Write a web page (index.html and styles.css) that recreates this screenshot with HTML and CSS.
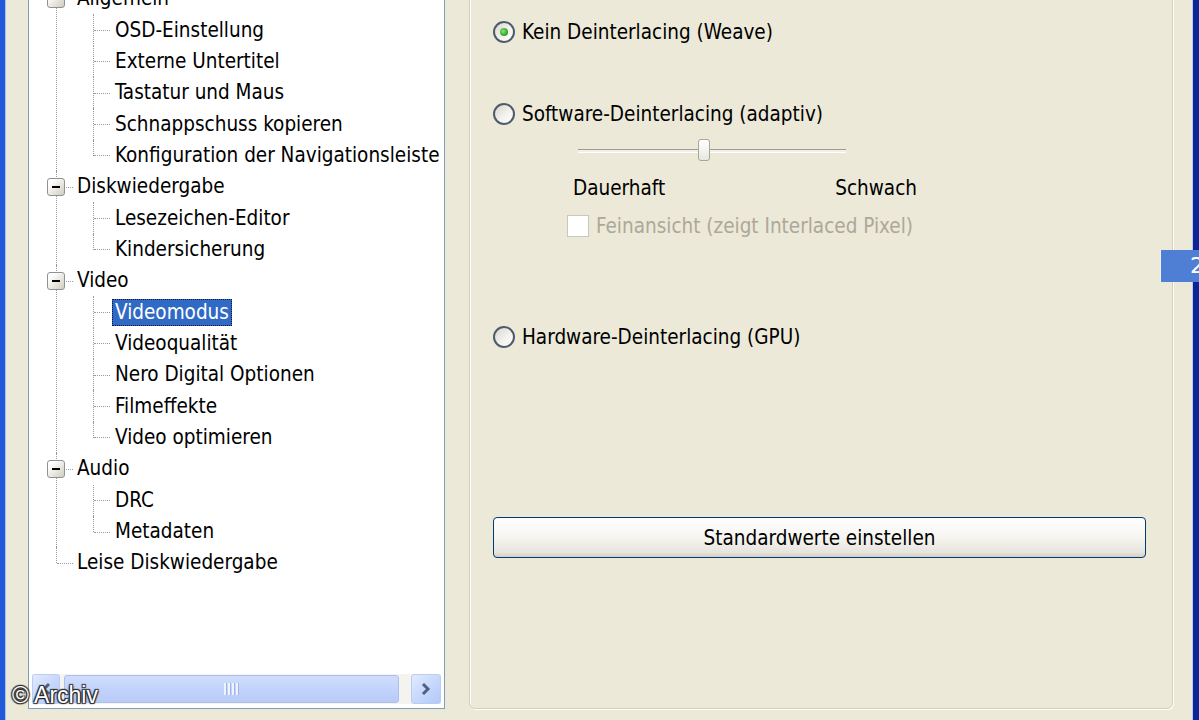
FILE: index.html
```html
<!DOCTYPE html>
<html lang="de">
<head>
<meta charset="utf-8">
<title>Videomodus</title>
<link rel="stylesheet" href="styles.css">
</head>
<body>
<div class="frame-left"></div>
<div class="content">
  <div class="tree-panel">
    <ul class="tree">
      <li>
        <div class="row"><span class="exp"></span><span class="label">Allgemein</span></div>
        <ul class="sub">
          <li><div class="row"><span class="label">OSD-Einstellung</span></div></li>
          <li><div class="row"><span class="label">Externe Untertitel</span></div></li>
          <li><div class="row"><span class="label">Tastatur und Maus</span></div></li>
          <li><div class="row"><span class="label">Schnappschuss kopieren</span></div></li>
          <li><div class="row"><span class="label">Konfiguration der Navigationsleiste</span></div></li>
        </ul>
      </li>
      <li>
        <div class="row"><span class="exp"></span><span class="label">Diskwiedergabe</span></div>
        <ul class="sub">
          <li><div class="row"><span class="label">Lesezeichen-Editor</span></div></li>
          <li><div class="row"><span class="label">Kindersicherung</span></div></li>
        </ul>
      </li>
      <li>
        <div class="row"><span class="exp"></span><span class="label">Video</span></div>
        <ul class="sub">
          <li><div class="row"><span class="label selected">Videomodus</span></div></li>
          <li><div class="row"><span class="label">Videoqualität</span></div></li>
          <li><div class="row"><span class="label">Nero Digital Optionen</span></div></li>
          <li><div class="row"><span class="label">Filmeffekte</span></div></li>
          <li><div class="row"><span class="label">Video optimieren</span></div></li>
        </ul>
      </li>
      <li>
        <div class="row"><span class="exp"></span><span class="label">Audio</span></div>
        <ul class="sub">
          <li><div class="row"><span class="label">DRC</span></div></li>
          <li><div class="row"><span class="label">Metadaten</span></div></li>
        </ul>
      </li>
      <li>
        <div class="row leaf"><span class="label">Leise Diskwiedergabe</span></div>
      </li>
    </ul>
    <div class="hscroll">
      <div class="sbtn left"><svg width="12" height="14" viewBox="0 0 12 14"><path d="M9 2 L4 7 L9 12" fill="none" stroke="#4d6185" stroke-width="3"/></svg></div>
      <div class="track">
        <div class="thumb"><span class="grip"></span></div>
      </div>
      <div class="sbtn right"><svg width="12" height="14" viewBox="0 0 12 14"><path d="M3 2 L8 7 L3 12" fill="none" stroke="#4d6185" stroke-width="3"/></svg></div>
    </div>
  </div>

  <div class="group">
    <div class="opt first"><span class="radio checked"></span><span>Kein Deinterlacing (Weave)</span></div>
    <div class="opt second"><span class="radio"></span><span>Software-Deinterlacing (adaptiv)</span></div>
    <div class="slider">
      <div class="groove"></div>
      <div class="knob"></div>
    </div>
    <div class="ticks"><span>Dauerhaft</span><span>Schwach</span></div>
    <div class="check disabled"><span class="box"></span><span>Feinansicht (zeigt Interlaced Pixel)</span></div>
    <div class="opt third"><span class="radio"></span><span>Hardware-Deinterlacing (GPU)</span></div>
    <button class="btn">Standardwerte einstellen</button>
  </div>
  <div class="gutter"></div>
</div>
<div class="frame-right"></div>
<div class="tab">2</div>
<div class="watermark">© Archiv</div>
</body>
</html>
```

FILE: styles.css
```css
html, body {
  margin: 0;
  padding: 0;
}
body {
  width: 1199px;
  height: 720px;
  overflow: hidden;
  display: flex;
  position: relative;
  background: #ece9d8;
  font-family: "DejaVu Sans Condensed", "DejaVu Sans", sans-serif;
  font-size: 20.5px;
  color: #000;
}
.frame-left {
  width: 5px;
  background: #2158d8;
  border-right: 1px solid #a9c0ee;
  flex: none;
}
.frame-right {
  width: 6px;
  flex: none;
  background: #0b2596;
  border-left: 1px solid #b7c8f3;
}
.content {
  flex: 1;
  display: flex;
  padding: 0 0 11px 22px;
  background: #ece9d8;
}
.tree-panel {
  width: 415px;
  margin-top: -20px;
  border: 1px solid #7f9db9;
  background: #fff;
  display: flex;
  flex-direction: column;
  flex: none;
}
.tree {
  list-style: none;
  margin: 0;
  padding: 2px 0 0 0;
  flex: 1;
  overflow: hidden;
}
.tree ul {
  list-style: none;
  margin: 0;
  padding: 0;
}
.tree li {
  position: relative;
}
.tree > li::before {
  content: "";
  position: absolute;
  left: 27px;
  top: 0;
  bottom: 0;
  border-left: 1px dotted #9a9a9a;
}
.tree > li:last-child::before {
  bottom: auto;
  height: 16px;
}
.sub > li::before {
  content: "";
  position: absolute;
  left: 64px;
  top: 0;
  bottom: 0;
  border-left: 1px dotted #9a9a9a;
}
.sub > li:last-child::before {
  bottom: auto;
  height: 16px;
}
.row {
  height: 31.35px;
  display: flex;
  align-items: center;
  position: relative;
  white-space: nowrap;
}
.row::before {
  content: "";
  position: absolute;
  top: 50%;
  border-top: 1px dotted #9a9a9a;
}
.tree > li > .row {
  padding-left: 18px;
}
.tree > li > .row::before {
  left: 28px;
  width: 16px;
}
.tree > li > .row.leaf {
  padding-left: 45px;
}
.sub .row {
  padding-left: 83px;
}
.sub .row::before {
  left: 65px;
  width: 16px;
}
.exp {
  width: 18px;
  height: 18px;
  box-sizing: border-box;
  border: 1px solid #8a9496;
  border-radius: 3px;
  background: linear-gradient(135deg, #ffffff 20%, #d6d2c6 90%);
  position: relative;
  z-index: 1;
  margin-right: 9px;
  flex: none;
}
.exp::after {
  content: "";
  position: absolute;
  left: 4px;
  top: 7px;
  width: 8px;
  height: 2px;
  background: #000;
}
.label {
  padding: 0 3px;
  height: 27px;
  line-height: 27px;
  box-sizing: border-box;
}
.label.selected {
  background: #316ac5;
  color: #fff;
  outline: 1px dotted #0b1540;
  outline-offset: -1px;
}
.hscroll {
  height: 30px;
  margin: 0 3px 4px 3px;
  display: flex;
  align-items: stretch;
  background: #f4f3ee;
}
.sbtn {
  width: 28px;
  box-sizing: border-box;
  border: 1px solid #b9ccf6;
  border-radius: 3px;
  background: linear-gradient(135deg, #e2ebfe 0%, #c3d5fc 60%, #b3c8f5 100%);
  display: flex;
  align-items: center;
  justify-content: center;
  flex: none;
}
.sbtn.right {
  width: 30px;
}
.track {
  flex: 1;
  padding: 1px 12px 1px 4px;
  display: flex;
}
.thumb {
  flex: 1;
  border: 1px solid #aac0f3;
  border-radius: 3px;
  background: linear-gradient(#cfdcfd, #c0d2fb 60%, #b8cbf6);
  display: flex;
  align-items: center;
  justify-content: center;
}
.grip {
  width: 16px;
  height: 12px;
  background: repeating-linear-gradient(90deg, #eef3ff 0 2px, #9fb5e6 2px 3px, transparent 3px 4px);
}
.group {
  box-sizing: border-box;
  width: 704px;
  margin: -20px 0 0 24px;
  border: 1px solid #d0d0bf;
  border-radius: 6px;
  box-shadow: inset 1px 1px 0 #fff, 1px 1px 0 #fff;
  display: flex;
  flex-direction: column;
  align-items: flex-start;
  padding: 39px 0 0 23px;
  flex: none;
}
.gutter {
  flex: 1;
}
.opt {
  display: flex;
  align-items: center;
  height: 24px;
  white-space: nowrap;
}
.opt.second {
  margin-top: 58px;
}
.opt.third {
  margin-top: 87px;
}
.radio {
  width: 22px;
  height: 22px;
  box-sizing: border-box;
  border: 2px solid #4e5c6a;
  border-radius: 50%;
  background: linear-gradient(135deg, #d8d5cb 0%, #f3f2ee 55%, #ffffff 100%);
  margin-right: 7px;
  position: relative;
  flex: none;
}
.radio.checked::after {
  content: "";
  position: absolute;
  left: 5px;
  top: 5px;
  width: 8px;
  height: 8px;
  border-radius: 50%;
  background: radial-gradient(circle at 40% 40%, #8ee27d, #21a121 70%);
}
.slider {
  position: relative;
  width: 268px;
  height: 22px;
  margin: 13px 0 0 85px;
}
.groove {
  position: absolute;
  left: 0;
  right: 0;
  top: 10px;
  height: 2px;
  border-top: 1px solid #9d9c99;
  border-bottom: 1px solid #fff;
  background: #f0efe9;
}
.knob {
  position: absolute;
  left: 120px;
  top: 0;
  width: 12px;
  height: 22px;
  box-sizing: border-box;
  border: 1px solid #a8a699;
  border-radius: 3px;
  background: linear-gradient(#ffffff, #e8e7df);
}
.ticks {
  width: 344px;
  margin: 15px 0 0 80px;
  display: flex;
  justify-content: space-between;
  height: 24px;
  line-height: 24px;
}
.check {
  margin: 14px 0 0 74px;
  height: 24px;
  display: flex;
  align-items: center;
  white-space: nowrap;
}
.check .box {
  width: 22px;
  height: 22px;
  box-sizing: border-box;
  border: 1px solid #cac8bb;
  background: #fff;
  margin-right: 7px;
}
.check.disabled {
  color: #aca899;
}
.btn {
  margin-top: 168px;
  width: 653px;
  height: 41px;
  border: 1px solid #003c74;
  border-radius: 4px;
  background: linear-gradient(#ffffff 0%, #f6f5f1 50%, #e6e4dc 88%, #d6d0c5 100%);
  font-family: "DejaVu Sans Condensed", "DejaVu Sans", sans-serif;
  font-size: 20.5px;
  color: #000;
  padding: 0;
}
.tab {
  position: absolute;
  left: 1160px;
  top: 250px;
  width: 44px;
  height: 32px;
  background: #4f7ed5;
  color: #fff;
  font-family: "DejaVu Sans", sans-serif;
  font-size: 22px;
  line-height: 32px;
  text-align: right;
  box-sizing: border-box;
  padding-right: 0;
  border-left: 1px solid #e9f0ff;
}
.watermark {
  position: absolute;
  left: 12px;
  top: 682px;
  font-family: "Liberation Sans", Arial, sans-serif;
  font-size: 23px;
  color: #fff;
  text-shadow: 1px 1px 1px #222, -1px -1px 1px #222, 1px -1px 1px #222, -1px 1px 1px #222;
}
```
